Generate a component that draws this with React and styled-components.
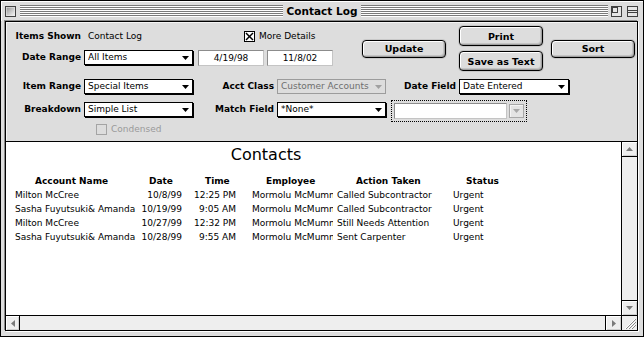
import React from 'react';
import styled, { createGlobalStyle } from 'styled-components';

const FONT = `"DejaVu Sans", Verdana, sans-serif`;

const Global = createGlobalStyle`
  html, body { margin: 0; padding: 0; background: #fff; }
  body { font-family: ${FONT}; -webkit-font-smoothing: none; }
  * { box-sizing: border-box; }
`;

const Window = styled.div`
  width: 644px;
  height: 337px;
  border: 1px solid #000;
  background: #dddddd;
  display: flex;
  flex-direction: column;
`;

const TitleBar = styled.div`
  height: 20px;
  display: grid;
  grid-template-columns: 1fr auto 1fr;
  align-items: center;
  background: #dddddd;
  box-shadow: inset 1px 1px 0 #fff;
`;

const TitleSide = styled.div`
  display: flex;
  align-items: center;
  height: 100%;
  padding: ${(p) => (p.$right ? '0 5px 0 0' : '0 0 0 4px')};
`;

const Stripes = styled.div`
  flex: 1;
  height: 12px;
  margin: ${(p) => (p.$left ? '0 0 0 4px' : '0')};
  background: repeating-linear-gradient(to bottom, #7b7b7b 0 1px, #ffffff 1px 2px);
`;

const TitleText = styled.div`
  padding: 0 4px;
  font: bold 10.5px/20px ${FONT};
  color: #000;
  white-space: nowrap;
`;

const WidgetBox = styled.div`
  width: 11px;
  height: 11px;
  flex-shrink: 0;
  margin-left: ${(p) => p.$ml || 0}px;
  display: flex;
`;

const Body = styled.div`
  flex: 1;
  min-height: 0;
  margin: 0 5px 5px 4px;
  border: 1px solid #000;
  box-shadow: -1px -1px 0 #8a8a8a, 1px 1px 0 #ffffff;
  display: flex;
  flex-direction: column;
  background: #dddddd;
`;

const Panel = styled.div`
  height: 120px;
  flex-shrink: 0;
  border-bottom: 1px solid #000;
  padding-top: 4px;
  display: flex;
  flex-direction: column;
  box-shadow: inset 1px 1px 0 #f4f4f4;
`;

const TopBlock = styled.div`
  display: flex;
  height: 45px;
`;

const FormTop = styled.div`
  width: 356px;
  display: flex;
  flex-direction: column;
`;

const FormRow = styled.div`
  display: flex;
  align-items: center;
  height: ${(p) => p.$h}px;
  margin-top: ${(p) => p.$mt}px;
`;

const Label = styled.div`
  width: ${(p) => (p.$w ? `${p.$w}px` : '100%')};
  flex-shrink: 0;
  text-align: right;
  font: bold 9px/15px ${FONT};
  color: #000;
  white-space: nowrap;
`;

const ValueText = styled.div`
  width: ${(p) => p.$w}px;
  margin-left: ${(p) => p.$ml}px;
  font: 9px/15px ${FONT};
  color: #000;
  white-space: nowrap;
`;

const CheckRow = styled.div`
  display: flex;
  align-items: center;
  gap: 4px;
  margin-left: ${(p) => p.$ml || 0}px;
  font: 9px/12px ${FONT};
  color: ${(p) => (p.$disabled ? '#9a9a9a' : '#000')};
`;

const PopupBox = styled.div`
  width: ${(p) => p.$w}px;
  height: 15px;
  flex-shrink: 0;
  margin-left: ${(p) => p.$ml || 0}px;
  border: 1px solid ${(p) => (p.$disabled ? '#9c9c9c' : '#000')};
  background: ${(p) => (p.$disabled ? '#dddddd' : '#fff')};
  box-shadow: ${(p) => (p.$disabled ? 'none' : '1px 1px 0 #000')};
  display: flex;
  align-items: center;
  padding: 0 3px 0 3px;
  font: 9px/13px ${FONT};
  color: ${(p) => (p.$disabled ? '#6e6e6e' : '#000')};
  white-space: nowrap;
`;

const PopupText = styled.span`
  flex: 1;
  overflow: hidden;
`;

const DateField = styled.div`
  width: 66px;
  height: 16px;
  margin-left: ${(p) => p.$ml}px;
  background: #fff;
  border: 1px solid;
  border-color: #8c8c8c #c4c4c4 #c4c4c4 #8c8c8c;
  font: 9px/14px ${FONT};
  text-align: center;
  color: #000;
`;

const ButtonGroup = styled.div`
  display: flex;
  align-items: center;
  height: 45px;
`;

const ButtonStack = styled.div`
  display: flex;
  flex-direction: column;
  gap: 5px;
  margin: 0 8px 0 13px;
`;

const Button = styled.div`
  width: ${(p) => p.$w || 84}px;
  height: ${(p) => p.$h}px;
  border: 1px solid #000;
  border-radius: 4px;
  background: #dddddd;
  box-shadow: inset 1px 1px 0 #ffffff, inset -1px -1px 0 #a0a0a0, inset -2px -2px 0 #c4c4c4, 0 0 0 1px #c8c8c8;
  display: flex;
  align-items: center;
  justify-content: center;
  font: bold 9.5px ${FONT};
  color: #000;
  white-space: nowrap;
`;

const FieldGrid = styled.div`
  display: grid;
  grid-template-columns: 75px 109px 78px 109px 67px 110px;
  grid-auto-rows: 15px;
  column-gap: 3px;
  row-gap: 8px;
  margin-top: 8px;
  align-items: center;
`;

const FocusRing = styled.div`
  grid-column: 5 / span 2;
  width: 136px;
  height: 22px;
  margin: -2px 0 -5px 2px;
  border: 1px dotted #000;
  padding: 2px;
  display: flex;
  gap: 2px;
`;

const TextField = styled.div`
  flex: 1;
  background: #fff;
  border: 1px solid;
  border-color: #8c8c8c #c4c4c4 #c4c4c4 #8c8c8c;
`;

const ArrowBtn = styled.div`
  width: 15px;
  margin: 1px 0;
  border: 1px solid #a8a8a8;
  background: #e4e4e4;
  box-shadow: inset 1px 1px 0 #f4f4f4;
  display: flex;
  align-items: center;
  justify-content: center;
`;

const CondensedRow = styled.div`
  margin-top: 6px;
  padding-left: 90px;
  display: flex;
`;

const ListArea = styled.div`
  flex: 1;
  min-height: 0;
  display: flex;
`;

const Pane = styled.div`
  flex: 1;
  background: #fff;
  overflow: hidden;
  padding: 3px 0 0 9px;
`;

const ReportTitle = styled.div`
  width: 497px;
  padding-left: 5px;
  text-align: center;
  font: 16px/20px ${FONT};
  color: #000;
`;

const Table = styled.div`
  display: grid;
  grid-template-columns: 122px 47px 66px 83px 119px 60px;
  grid-auto-rows: 14px;
  margin-top: 9px;
`;

const HeadCell = styled.div`
  padding-left: ${(p) => p.$pad}px;
  font: bold 9px/14px ${FONT};
  color: #000;
  white-space: nowrap;
`;

const Cell = styled.div`
  text-align: ${(p) => p.$align};
  padding: ${(p) => p.$pad};
  font: 9px/14px ${FONT};
  color: #000;
  white-space: nowrap;
  overflow: hidden;
`;

const VScroll = styled.div`
  width: 16px;
  border-left: 1px solid #000;
  background: #eeeeee;
  display: flex;
  flex-direction: column;
`;

const ScrollTrack = styled.div`
  flex: 1;
  background: #eeeeee;
`;

const ArrowBox = styled.div`
  flex-shrink: 0;
  width: ${(p) => (p.$w ? `${p.$w}px` : 'auto')};
  height: ${(p) => (p.$w ? 'auto' : '15px')};
  background: #eeeeee;
  border-style: solid;
  border-color: #000;
  border-width: ${(p) => p.$bw};
  box-shadow: inset 1px 1px 0 #fff, inset -1px -1px 0 #cfcfcf;
  display: flex;
  align-items: center;
  justify-content: center;
`;

const HScroll = styled.div`
  height: 15px;
  flex-shrink: 0;
  border-top: 1px solid #000;
  display: flex;
  background: #eeeeee;
`;

const GrowBox = styled.div`
  width: 16px;
  border-left: 1px solid #000;
  background: #eeeeee;
  display: flex;
  align-items: center;
  justify-content: center;
`;

const Tri = ({ dir = 'down', color = '#000' }) => {
  const pts = {
    down: '0,0 7,0 3.5,4',
    up: '3.5,0 7,4 0,4',
    left: '4,0 4,7 0,3.5',
    right: '0,0 4,3.5 0,7',
  }[dir];
  const vertical = dir === 'down' || dir === 'up';
  return (
    <svg width={vertical ? 7 : 4} height={vertical ? 4 : 7} style={{ display: 'block', flexShrink: 0 }}>
      <polygon points={pts} fill={color} />
    </svg>
  );
};

const CheckBox = ({ checked, disabled }) => (
  <svg width="11" height="11" style={{ display: 'block' }}>
    <rect x="0.5" y="0.5" width="10" height="10" fill={disabled ? '#dddddd' : '#fff'} stroke={disabled ? '#a4a4a4' : '#000'} />
    {checked && (
      <g stroke="#000" strokeWidth="1.5">
        <line x1="2" y1="2" x2="9" y2="9" />
        <line x1="9" y1="2" x2="2" y2="9" />
      </g>
    )}
  </svg>
);

const CloseIcon = () => (
  <svg width="11" height="11">
    <defs>
      <linearGradient id="cg" x1="0" y1="0" x2="1" y2="1">
        <stop offset="0" stopColor="#8a8a8a" />
        <stop offset="1" stopColor="#ffffff" />
      </linearGradient>
    </defs>
    <rect x="0.5" y="0.5" width="10" height="10" fill="url(#cg)" stroke="#404040" />
    <rect x="1.5" y="1.5" width="8" height="8" fill="none" stroke="#e8e8e8" strokeWidth="0.6" />
  </svg>
);

const ZoomIcon = () => (
  <svg width="11" height="11">
    <rect x="0.5" y="0.5" width="10" height="10" fill="#e6e6e6" stroke="#404040" />
    <rect x="1.5" y="1.5" width="5" height="5" fill="none" stroke="#404040" />
  </svg>
);

const CollapseIcon = () => (
  <svg width="11" height="11">
    <rect x="0.5" y="0.5" width="10" height="10" fill="#e6e6e6" stroke="#404040" />
    <line x1="1" y1="4.5" x2="10" y2="4.5" stroke="#404040" />
    <line x1="1" y1="6.5" x2="10" y2="6.5" stroke="#404040" />
  </svg>
);

const GrowIcon = () => (
  <svg width="14" height="13">
    <g stroke="#8a8a8a" strokeWidth="1">
      <line x1="13" y1="2" x2="3" y2="12" />
      <line x1="13" y1="5" x2="6" y2="12" />
      <line x1="13" y1="8" x2="9" y2="12" />
    </g>
    <g stroke="#ffffff" strokeWidth="1">
      <line x1="12" y1="2" x2="2" y2="12" />
      <line x1="12" y1="5" x2="5" y2="12" />
      <line x1="12" y1="8" x2="8" y2="12" />
    </g>
  </svg>
);

const Popup = ({ w, ml, disabled, children }) => (
  <PopupBox $w={w} $ml={ml} $disabled={disabled}>
    <PopupText>{children}</PopupText>
    <Tri dir="down" color={disabled ? '#a0a0a0' : '#000'} />
  </PopupBox>
);

const columns = [
  { title: 'Account Name', hpad: 20, align: 'left', pad: '0' },
  { title: 'Date', hpad: 12, align: 'right', pad: '0 2px 0 0' },
  { title: 'Time', hpad: 21, align: 'right', pad: '0 14px 0 0' },
  { title: 'Employee', hpad: 16, align: 'left', pad: '0 0 0 2px' },
  { title: 'Action Taken', hpad: 23, align: 'left', pad: '0 0 0 4px' },
  { title: 'Status', hpad: 14, align: 'left', pad: '0 0 0 1px' },
];

const rows = [
  ['Milton McCree', '10/8/99', '12:25 PM', 'Mormolu McMummy', 'Called Subcontractor', 'Urgent'],
  ['Sasha Fuyutsuki& Amanda', '10/19/99', '9:05 AM', 'Mormolu McMummy', 'Called Subcontractor', 'Urgent'],
  ['Milton McCree', '10/27/99', '12:32 PM', 'Mormolu McMummy', 'Still Needs Attention', 'Urgent'],
  ['Sasha Fuyutsuki& Amanda', '10/28/99', '9:55 AM', 'Mormolu McMummy', 'Sent Carpenter', 'Urgent'],
];

export default function App() {
  return (
    <>
      <Global />
      <Window>
        <TitleBar>
          <TitleSide>
            <WidgetBox><CloseIcon /></WidgetBox>
            <Stripes $left />
          </TitleSide>
          <TitleText>Contact Log</TitleText>
          <TitleSide $right>
            <Stripes />
            <WidgetBox $ml={3}><ZoomIcon /></WidgetBox>
            <WidgetBox $ml={5}><CollapseIcon /></WidgetBox>
          </TitleSide>
        </TitleBar>
        <Body>
          <Panel>
            <TopBlock>
              <FormTop>
                <FormRow $h={14} $mt={3}>
                  <Label $w={75}>Items Shown</Label>
                  <ValueText $ml={7} $w={156}>Contact Log</ValueText>
                  <CheckRow>
                    <CheckBox checked />
                    More Details
                  </CheckRow>
                </FormRow>
                <FormRow $h={17} $mt={6}>
                  <Label $w={75}>Date Range</Label>
                  <Popup w={109} ml={3}>All Items</Popup>
                  <DateField $ml={5}>4/19/98</DateField>
                  <DateField $ml={3}>11/8/02</DateField>
                </FormRow>
              </FormTop>
              <ButtonGroup>
                <Button $h={18}>Update</Button>
                <ButtonStack>
                  <Button $h={20}>Print</Button>
                  <Button $h={20}>Save as Text</Button>
                </ButtonStack>
                <Button $h={18}>Sort</Button>
              </ButtonGroup>
            </TopBlock>
            <FieldGrid>
              <Label>Item Range</Label>
              <Popup w={109}>Special Items</Popup>
              <Label>Acct Class</Label>
              <Popup w={109} disabled>Customer Accounts</Popup>
              <Label>Date Field</Label>
              <Popup w={110}>Date Entered</Popup>
              <Label>Breakdown</Label>
              <Popup w={109}>Simple List</Popup>
              <Label>Match Field</Label>
              <Popup w={109}>*None*</Popup>
              <FocusRing>
                <TextField />
                <ArrowBtn><Tri dir="down" color="#a8a8a8" /></ArrowBtn>
              </FocusRing>
            </FieldGrid>
            <CondensedRow>
              <CheckRow $disabled>
                <CheckBox disabled />
                Condensed
              </CheckRow>
            </CondensedRow>
          </Panel>
          <ListArea>
            <Pane>
              <ReportTitle>Contacts</ReportTitle>
              <Table>
                {columns.map((c) => (
                  <HeadCell key={c.title} $pad={c.hpad}>{c.title}</HeadCell>
                ))}
                {rows.map((r, i) =>
                  r.map((v, j) => (
                    <Cell key={`${i}-${j}`} $align={columns[j].align} $pad={columns[j].pad}>{v}</Cell>
                  ))
                )}
              </Table>
            </Pane>
            <VScroll>
              <ArrowBox $bw="0 0 1px 0"><Tri dir="up" color="#7a7a7a" /></ArrowBox>
              <ScrollTrack />
              <ArrowBox $bw="1px 0 0 0"><Tri dir="down" color="#7a7a7a" /></ArrowBox>
            </VScroll>
          </ListArea>
          <HScroll>
            <ArrowBox $w={14} $bw="0 1px 0 0"><Tri dir="left" color="#7a7a7a" /></ArrowBox>
            <ScrollTrack />
            <ArrowBox $w={16} $bw="0 0 0 1px"><Tri dir="right" color="#7a7a7a" /></ArrowBox>
            <GrowBox><GrowIcon /></GrowBox>
          </HScroll>
        </Body>
      </Window>
    </>
  );
}
